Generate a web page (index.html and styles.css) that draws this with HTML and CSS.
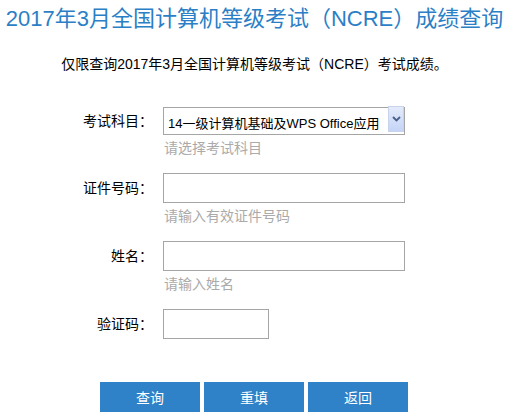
FILE: index.html
```html
<!DOCTYPE html>
<html lang="zh-CN">
<head>
    <meta charset="UTF-8">
    <meta name="viewport" content="width=device-width, initial-scale=1.0">
    <title>成绩查询</title>
    <link rel="stylesheet" href="styles.css">
</head>
<body>
    <div class="container">
        <h1 class="title">2017年3月全国计算机等级考试（NCRE）成绩查询</h1>
        <p class="notice">仅限查询2017年3月全国计算机等级考试（NCRE）考试成绩。</p>

        <!-- Query form -->
        <form class="query-form" onsubmit="return false;">
            <div class="form-row">
                <label class="form-label" for="subject">考试科目：</label>
                <div class="form-field">
                    <div class="select-wrap">
                        <select id="subject" class="select">
                            <option>14一级计算机基础及WPS Office应用</option>
                        </select>
                        <span class="select-arrow">
                            <svg width="9" height="6" viewBox="0 0 9 6"><path d="M1 1 L4.5 4.5 L8 1" fill="none" stroke="#4a5f8a" stroke-width="1.8"/></svg>
                        </span>
                    </div>
                    <p class="hint">请选择考试科目</p>
                </div>
            </div>

            <div class="form-row">
                <label class="form-label" for="idno">证件号码：</label>
                <div class="form-field">
                    <input id="idno" class="input" type="text">
                    <p class="hint">请输入有效证件号码</p>
                </div>
            </div>

            <div class="form-row">
                <label class="form-label" for="name">姓名：</label>
                <div class="form-field">
                    <input id="name" class="input" type="text">
                    <p class="hint">请输入姓名</p>
                </div>
            </div>

            <div class="form-row captcha-row">
                <label class="form-label" for="code">验证码：</label>
                <div class="form-field">
                    <input id="code" class="input input-small" type="text">
                </div>
            </div>

            <!-- Buttons -->
            <div class="actions">
                <button type="submit" class="btn">查询</button>
                <button type="reset" class="btn">重填</button>
                <button type="button" class="btn">返回</button>
            </div>
        </form>
    </div>
</body>
</html>
```

FILE: styles.css
```css
body {
    font-family: "Liberation Sans", "Noto Sans CJK SC", sans-serif;
    margin: 0;
    background-color: #fff;
    color: #000;
}
.container {
    width: 509px;
}
.title {
    margin: 0;
    padding-top: 4px;
    font-size: 22px;
    font-weight: normal;
    line-height: 30px;
    color: #2b7fc6;
    text-align: center;
    white-space: nowrap;
}
.notice {
    margin: 20px 0 0;
    font-size: 14px;
    line-height: 20px;
    text-align: center;
}
.query-form {
    margin-top: 33px;
}
.form-row {
    display: grid;
    grid-template-columns: 153px 242px;
    column-gap: 10px;
    margin-bottom: 16px;
}
.captcha-row {
    margin-bottom: 43px;
}
.form-label {
    height: 30px;
    line-height: 30px;
    font-size: 14px;
    text-align: right;
}
.form-row:first-child .form-label {
    height: 28px;
    line-height: 28px;
}
.form-field {
    display: flex;
    flex-direction: column;
}
.select-wrap {
    position: relative;
    height: 28px;
}
.select {
    appearance: none;
    width: 242px;
    height: 28px;
    box-sizing: border-box;
    margin: 0;
    padding: 5px 0 0 4px;
    border: 1px solid #a5a5a5;
    border-radius: 0;
    background: #fff;
    font-family: inherit;
    font-size: 13px;
    line-height: 18px;
    color: #000;
}
.select-arrow {
    position: absolute;
    top: -1px;
    right: 1px;
    width: 16px;
    height: 26px;
    display: flex;
    align-items: center;
    justify-content: center;
    background: linear-gradient(#e4ebfb, #c5d4f6);
    border: 1px solid #c8d4ee;
    box-sizing: border-box;
}
.input {
    width: 242px;
    height: 30px;
    box-sizing: border-box;
    margin: 0;
    border: 1px solid #a5a5a5;
    padding: 0 4px;
    font-size: 14px;
}
.input-small {
    width: 106px;
}
.hint {
    margin: 4px 0 0 1px;
    font-size: 14px;
    line-height: 18px;
    color: #aaa;
}
.actions {
    display: flex;
    justify-content: center;
    gap: 4px;
    padding-right: 1px;
}
.btn {
    width: 100px;
    height: 30px;
    border: none;
    border-radius: 0;
    background-color: #2f82c7;
    color: #fff;
    font-family: inherit;
    font-size: 14px;
    cursor: pointer;
}
```
